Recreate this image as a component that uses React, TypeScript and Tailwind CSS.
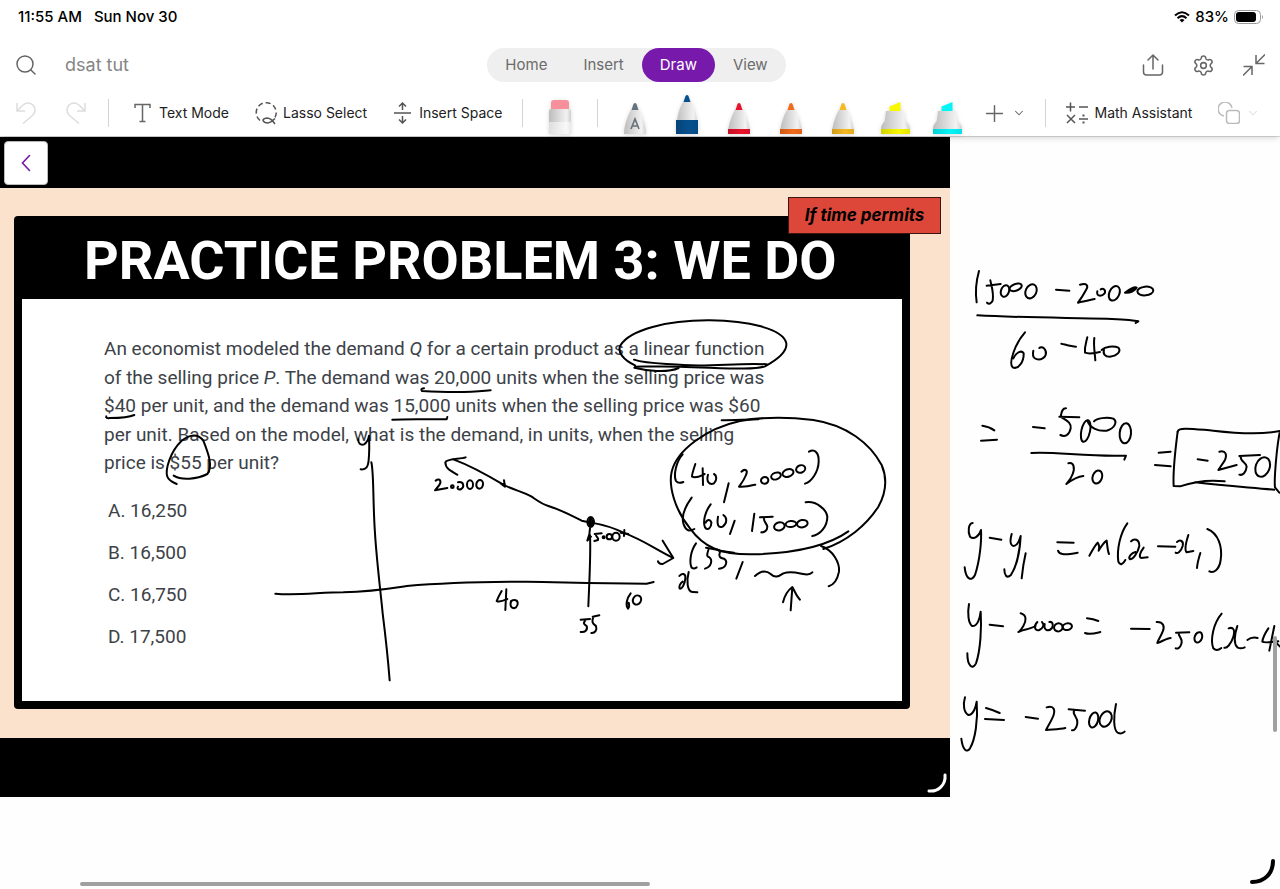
import { ReactNode, useState } from 'react';
import { ChevronDown, Plus, Search, Settings } from 'lucide-react';

type InkGroup = { x: number; y: number; strokes: string[] };

// closed oval, drawn as two arcs
const oval = (cx: number, cy: number, rx: number, ry: number, rot = 0) => {
    const a = (rot * Math.PI) / 180;
    const dx = rx * Math.cos(a);
    const dy = rx * Math.sin(a);
    return `M${cx - dx} ${cy - dy}A${rx} ${ry} ${rot} 1 1 ${cx + dx} ${cy + dy}A${rx} ${ry} ${rot} 1 1 ${cx - dx} ${cy - dy}`;
};

// pen strokes on the canvas, stored at three times the canvas resolution
const ink: InkGroup[] = [
    // underlines
    {
        x: 0,
        y: 43,
        strokes: [
            'M319 709Q316 716 330 714C355 714 385 713 403 705',
            'M1177 719C1220 716 1290 718 1340 718L1342 711',
            'M1075 778C1074 790 1082 797 1092 793C1102 787 1106 775 1107 767C1108 790 1108 820 1106 840C1104 862 1098 870 1082 868',
        ],
    },
    // circled $55
    {
        x: 90,
        y: 183,
        strokes: [
            'M251 467C275 482 320 478 352 462C370 440 355 400 340 362C325 340 300 342 275 362C240 395 225 450 232 470C238 484 248 486 260 492',
        ],
    },
    // "linear function" loop
    {
        x: 400,
        y: 163,
        strokes: [
            'M72 265Q60 266 66 273C120 276 200 278 256 272L272 271',
            'M705 196C670 180 650 155 662 135C690 90 800 60 930 61C1040 62 1150 85 1159 130C1162 155 1130 180 1095 199C1060 212 960 203 840 200C780 199 730 200 705 200',
            'M702 179C740 192 790 190 850 195C930 201 1020 188 1100 193',
            'M703 203C740 212 800 220 836 204',
            'M965 361C1000 361 1030 359 1075 358',
        ],
    },
    // coordinate pairs
    {
        x: 640,
        y: 263,
        strokes: [
            'M300 63C360 52 440 50 520 60C620 75 690 130 725 195C742 235 740 275 715 320C680 375 620 425 550 447',
            'M625 394C560 440 450 460 340 463C240 465 190 440 150 385C105 330 85 260 95 215C110 150 200 85 300 63',
            'M128 163C108 185 100 225 108 243Q115 252 130 246',
            'M166 192C160 210 155 225 156 230C170 236 185 226 194 222M188 205L189 255',
            'M204 224C198 245 208 256 222 250C232 240 230 226 222 222',
            'M266 250L252 307',
            'M304 215C315 205 325 210 318 225C310 245 300 255 297 260C315 262 330 258 346 254',
            oval(374, 241, 11, 10, -20),
            oval(408, 228, 15, 10, -20),
            oval(444, 219, 17, 11, -20),
            oval(482, 207, 14, 11, -20),
            'M507 155C525 145 537 160 536 185C535 215 515 245 495 251',
            'M155 293C135 320 125 350 130 370C138 395 150 395 163 387',
            'M212 313C195 335 188 365 195 382C203 394 215 382 214 367C210 355 200 360 197 368',
            'M234 350C230 375 235 385 248 380C262 370 262 352 250 345',
            'M284 362L270 402',
            'M343 341L336 393',
            'M360 352L398 350M372 353C370 365 380 370 382 380C382 392 372 398 364 397',
            oval(418, 379, 16, 12, -15),
            oval(453, 372, 16, 9, -5),
            oval(487, 371, 16, 11, -10),
            'M497 307C530 302 560 330 562 350C562 380 540 405 517 408',
            'M168 430C150 455 148 490 155 503Q162 508 170 502',
            'M205 450C200 465 200 470 208 472C218 480 215 500 195 506M198 443L236 450',
            'M240 455C235 470 240 475 252 476C265 485 258 505 237 506M236 452L282 458',
            'M308 486L289 536',
            'M345 528C365 510 380 512 392 522C405 535 415 530 430 520C455 512 475 520 495 523Q510 525 517 517',
            'M543 438C580 450 600 490 597 515C592 540 580 555 566 559',
            'M452 631L457 562M429 607C433 590 445 570 457 561C465 575 470 590 480 599',
            'M118 528C125 518 138 520 136 535C134 555 125 568 119 566C116 560 120 550 128 545M146 516C140 540 140 575 158 576L172 577',
        ],
    },
    // graph
    {
        x: 260,
        y: 283,
        strokes: [
            'M334 127C342 160 338 240 345 340C350 420 360 500 368 580C378 660 385 730 389 781',
            'M46 521C110 527 180 517 250 517C330 515 380 507 440 498C530 490 640 485 800 485C900 486 980 490 1160 491L1181 486',
            'M580 118C640 140 690 170 730 194C760 210 790 215 815 230C830 240 845 252 865 258C910 272 940 290 965 302C1000 310 1040 312 1090 338C1150 360 1190 390 1238 413',
            'M617 112C600 118 560 115 556 127C556 145 570 152 592 164',
            'M732 181L735 200L724 192L734 190',
            'M527 182C540 172 545 185 538 195L525 211L562 204',
            oval(577, 200, 4, 4),
            'M594 187C611 183 614 200 604 207C595 211 590 205 594 200',
            oval(630, 194, 9, 13),
            oval(659, 193, 10, 13, 10),
            oval(992, 306, 10, 15),
            oval(992, 307, 5, 11),
            'M992 296L992 318',
            'M990 325L988 343L982 362L993 350M990 345C993 400 988 480 985 559',
            'M1004 342L1025 340M1008 342C1006 352 1018 352 1014 360L1003 363',
            oval(1031, 352, 3, 3),
            oval(1048, 350, 8, 8),
            oval(1068, 350, 11, 12),
            'M1082 338L1105 342M1093 330L1092 348',
            'M1208 362L1240 414L1208 432Q1196 433 1194 424',
            'M725 513C718 525 712 538 710 543C720 548 735 540 742 537M739 508L736 570',
            'M753 543C748 562 758 568 768 562C777 552 774 540 763 540Q754 540 753 546',
            'M1112 520C1100 535 1096 555 1104 566Q1110 560 1106 548',
            oval(1131, 540, 12, 14, 30),
            'M962 599L990 597M977 599C968 612 972 612 980 618C984 630 975 638 962 636',
            'M998 590L1018 586M1000 590C994 608 998 610 1008 618C1012 630 1005 640 994 639',
        ],
    },
    // slope
    {
        x: 950,
        y: 113,
        strokes: [
            'M87 63C78 95 76 130 80 157',
            'M121 91C125 110 132 130 128 152Q120 166 111 158M110 107L152 102',
            oval(165, 123, 12, 18, 20),
            oval(197, 112, 19, 10, -20),
            oval(243, 124, 16, 22, 25),
            'M318 119L358 122',
            'M390 104C412 98 416 108 408 120C400 135 390 150 384 158C400 154 420 150 434 147',
            'M442 124C438 140 455 140 464 130C468 120 460 113 452 118',
            oval(493, 130, 15, 23, 25),
            'M525 128C540 115 555 110 560 113C556 122 540 130 525 128L552 117',
            oval(586, 123, 24, 13, -5),
            'M82 196C200 203 350 203 470 206C510 208 545 209 565 214L557 219',
            'M225 247C195 280 175 340 188 352C205 360 222 335 221 310C215 300 200 305 190 325',
            'M250 302C245 325 258 330 272 328C290 322 292 305 282 295C276 290 270 292 268 294',
            'M334 281C350 285 365 290 378 290',
            'M412 262C408 280 403 290 405 308C420 314 435 308 450 306M433 264C430 285 434 305 436 331',
            'M455 300C465 290 490 286 505 293C515 305 500 318 480 320C465 320 458 312 462 300',
            'M97 527Q118 530 133 541M93 572L141 569',
            'M249 531L284 535',
            'M348 475C335 475 335 488 332 500C345 510 365 515 362 535C358 555 345 562 331 555M328 500L388 502',
            oval(407, 543, 13, 33, 12),
            'M412 512C420 535 445 545 470 542C495 535 503 515 490 506C470 500 440 505 432 514',
            oval(526, 550, 17, 30, 5),
            'M244 609C300 604 400 618 500 617L528 617L523 629',
            'M355 640C372 635 375 655 368 672C362 690 350 700 349 702C365 690 380 680 400 678',
            oval(442, 681, 14, 20, 20),
            'M626 608L662 605M615 645L662 649',
            'M683 545C676 600 668 660 671 708L690 709C740 692 790 690 824 694M735 697C830 708 900 712 973 719',
            'M683 545C684 530 730 537 790 542C860 550 930 555 990 543C980 590 972 690 975 712L988 728',
            'M743 628L773 632',
            'M808 605C828 600 832 615 824 632L805 660L860 645',
            'M868 618L930 615M872 618C870 635 888 635 890 650C888 668 878 677 868 674',
            oval(938, 651, 21, 30, 20),
        ],
    },
    // point-slope form
    {
        x: 950,
        y: 363,
        strokes: [
            'M68 69C55 70 53 95 60 110C72 120 88 108 93 90C95 120 90 180 75 225C65 245 48 240 44 202',
            'M119 113L154 119',
            'M185 102C180 120 180 135 190 138C200 138 208 122 212 108C210 150 200 200 182 226C170 236 163 225 163 208',
            'M227 160C220 190 217 215 215 235',
            'M322 127L371 128M324 152C328 165 345 165 383 158',
            'M418 167C428 150 435 135 443 128C448 135 448 145 446 152C452 142 460 128 470 122C472 135 472 150 477 162',
            'M532 70C510 100 500 150 505 185C510 198 520 192 526 180',
            'M543 124C552 114 568 117 568 138C563 160 549 178 540 178C533 172 545 158 556 156M581 143C570 158 566 170 573 174L593 172',
            'M624 139L676 140',
            'M681 126C690 118 702 122 698 138C693 155 682 162 677 158M715 105C707 130 702 150 710 157L730 153',
            'M751 159C746 175 742 190 741 204',
            'M772 87C805 100 818 140 812 180C808 210 790 220 778 214',
            'M57 312C52 340 55 370 66 378C82 380 90 355 92 335C95 380 92 450 78 490C68 510 52 500 52 460',
            'M119 374L159 379',
            'M212 340C232 345 228 365 220 378C212 392 205 398 205 396C215 390 240 388 256 378',
            'M262 366C250 378 254 394 268 390C280 384 284 374 276 366M284 372C280 392 296 396 306 384C312 372 306 364 298 366',
            oval(325, 382, 13, 12, -20),
            oval(352, 380, 14, 10, -10),
            'M411 355Q430 357 445 363M405 399C420 405 435 400 451 396',
            'M543 386L599 387',
            'M620 366C640 365 645 380 638 395C632 410 622 425 622 429C635 425 650 415 662 414',
            'M678 398L718 397M686 398C684 410 700 415 694 432C690 445 682 447 677 445',
            oval(745, 412, 11, 16, 20),
            'M815 341C790 370 780 420 790 445Q800 455 814 444',
            'M836 385C850 380 856 390 850 410C842 435 830 445 823 443M862 378C855 400 850 430 862 442Q872 448 884 442',
            'M892 420Q905 410 923 414',
            'M955 385C945 400 938 415 937 425C945 430 965 426 985 424M973 378L958 452M980 430L990 440',
            'M45 592C38 615 42 638 55 645C70 645 78 620 80 605C85 660 75 720 60 745C50 760 38 750 34 716',
            'M108 624Q130 630 149 639M105 657L162 660',
            'M227 651L264 656',
            'M290 622C312 615 318 630 308 652C300 670 290 685 288 690C310 688 330 688 346 684',
            'M356 628L405 632M372 632C366 645 385 650 382 670C380 685 372 692 366 691',
            oval(431, 660, 13, 23, 15),
            oval(467, 657, 17, 24, 25),
            'M498 612C490 650 490 690 503 698Q515 704 524 695',
        ],
    },
];

const tabs = ['Home', 'Insert', 'Draw', 'View'];

const pens = [
    { name: 'Red pen', color: '#e8132b' },
    { name: 'Orange pen', color: '#f26a1b' },
    { name: 'Yellow pen', color: '#f5b921' },
];

const highlighters = [
    { name: 'Yellow highlighter', color: '#f8f800' },
    { name: 'Cyan highlighter', color: '#05f4f8' },
];

function Divider() {
    return <div className="h-7 w-px shrink-0 bg-[#d4d4d4]" />;
}

function ToolButton({ label, children }: { label: string; children: ReactNode }) {
    return (
        <button className="flex shrink-0 items-center gap-1.5 text-sm whitespace-nowrap text-[#212121]">
            {children}
            {label}
        </button>
    );
}

// tip and band are distances from the top of the drawing
function Pen({ color, band, tip, children }: { color: string; band: number; tip: number; children?: ReactNode }) {
    return (
        <svg width="28" height="40" viewBox="0 0 28 40" className="drop-shadow-sm">
            <path d={`M3 40C3 ${tip + 22} 7 ${tip + 12} 10 ${tip + 7}H18C21 ${tip + 12} 25 ${tip + 22} 25 40Z`} fill="url(#barrel)" />
            <path d={`M10.500 ${tip + 7}L12.500 ${tip + 1}Q14 ${tip - 1} 15.500 ${tip + 1}L17.500 ${tip + 7}Z`} fill={color} />
            {band < 40 && <path d={`M3 40V${band}H25V40Z`} fill={color} />}
            {band < 40 && <path d={`M3 40V${band}H25V40Z`} fill="url(#shade)" />}
            {children}
        </svg>
    );
}

function Highlighter({ color }: { color: string }) {
    return (
        <svg width="32" height="40" viewBox="0 0 32 40" className="drop-shadow-sm">
            <path d="M10.500 17V12.500L21.500 8V17Z" fill={color} />
            <path d="M7 17H25L26 25C27 29 31 29 31 35V40H2V35C2 29 6 29 6 25Z" fill="url(#barrel)" />
            <path d="M2 35H31V40H2Z" fill={color} />
            <path d="M2 35H31V40H2Z" fill="url(#shade)" />
        </svg>
    );
}

function StatusBar() {
    return (
        <div className="flex h-[34px] items-center justify-between pr-4 pl-[18px] text-[15px] font-medium text-black">
            <div className="flex gap-3">
                <span>11:55 AM</span>
                <span>Sun Nov 30</span>
            </div>
            <div className="flex items-center gap-[5px]">
                <svg width="16" height="12" viewBox="0 0 16 12" fill="none" stroke="#000" strokeWidth="2">
                    <path d="M1 4.500Q8-2 15 4.500M3.500 7.200Q8 3 12.500 7.200" />
                    <path d="M8 11.500L5.500 9Q8 7 10.500 9Z" fill="#000" stroke="none" />
                </svg>
                <span>83%</span>
                <svg width="30" height="14" viewBox="0 0 30 14">
                    <rect x="0.500" y="0.500" width="26" height="13" rx="4" fill="none" stroke="#999" />
                    <rect x="2" y="2" width="20" height="10" rx="3" />
                    <path d="M28 5Q30 7 28 9Z" fill="#999" />
                </svg>
            </div>
        </div>
    );
}

function TitleBar() {
    const [active, setActive] = useState('Draw');

    return (
        <div className="grid h-[62px] grid-cols-[1fr_auto_1fr] items-center pr-[15px] pl-2">
            <div className="flex items-center gap-[21px]">
                <button aria-label="Search" className="flex w-9 justify-center text-[#666]">
                    <Search size={24} strokeWidth={1.5} />
                </button>
                <input
                    aria-label="Notebook"
                    defaultValue="dsat tut"
                    className="w-40 bg-transparent text-lg text-[#858585] outline-none"
                />
            </div>
            <nav className="flex h-[34px] rounded-full bg-[#efefef]">
                {tabs.map((tab) => (
                    <button
                        key={tab}
                        onClick={() => setActive(tab)}
                        className={`rounded-full px-[18px] text-[15px] ${tab === active ? 'bg-[#7719aa] text-white' : 'text-[#6b6b6b]'}`}
                    >
                        {tab}
                    </button>
                ))}
            </nav>
            <div className="flex items-center justify-end gap-7 text-[#666]">
                <button aria-label="Share">
                    <svg width="22" height="22" viewBox="0 0 22 22" fill="none" stroke="currentColor" strokeWidth="1.500" strokeLinecap="round" strokeLinejoin="round">
                        <path d="M11 15V1M6 6L11 1L16 6M1.500 11V18Q1.500 21 4.500 21H17.500Q20.500 21 20.500 18V11" />
                    </svg>
                </button>
                <button aria-label="Settings">
                    <Settings size={23} strokeWidth={1.6} />
                </button>
                <button aria-label="Exit full screen">
                    <svg width="22" height="22" viewBox="0 0 22 22" fill="none" stroke="currentColor" strokeWidth="1.500">
                        <path d="M22 0.500L13 9.500M13 1V9.500H21.500M0 21.500L9 12.500M0.500 12.500H9V21" />
                    </svg>
                </button>
            </div>
        </div>
    );
}

function Toolbar() {
    return (
        <div className="flex h-10 items-start pl-px">
            <svg width="0" height="0" className="absolute">
                <linearGradient id="barrel">
                    <stop offset="0" stopColor="#bdbdbd" />
                    <stop offset="0.5" stopColor="#dedede" />
                    <stop offset="0.8" stopColor="#f2f2f2" />
                    <stop offset="1" stopColor="#d0d0d0" />
                </linearGradient>
                <linearGradient id="shade">
                    <stop offset="0" stopColor="#000" stopOpacity="0.15" />
                    <stop offset="0.6" stopColor="#000" stopOpacity="0" />
                    <stop offset="1" stopColor="#000" stopOpacity="0.08" />
                </linearGradient>
            </svg>
            <div className="flex h-[34px] shrink-0 items-center">
                <button aria-label="Undo" className="flex w-[50px] justify-center text-[#ddd]">
                    <svg width="20" height="22" viewBox="0 0 20 22" fill="none" stroke="currentColor" strokeWidth="1.500">
                        <path d="M1 1V9H9M1 9L7 3Q12-1 17 3Q21 8 17 13L7 21.500" />
                    </svg>
                </button>
                <button aria-label="Redo" className="flex w-[50px] justify-center text-[#ddd]">
                    <svg width="20" height="22" viewBox="0 0 20 22" fill="none" stroke="currentColor" strokeWidth="1.500">
                        <path d="M19 1V9H11M19 9L13 3Q8-1 3 3Q-1 8 3 13L13 21.500" />
                    </svg>
                </button>
            </div>
            <div className="flex h-[34px] shrink-0 items-center pl-[7px]">
                <Divider />
                <div className="flex gap-[26px] pr-5 pl-6">
                    <ToolButton label="Text Mode">
                        <svg width="20" height="20" viewBox="0 0 20 20" fill="none" stroke="#666" strokeWidth="1.500">
                            <path d="M2 5V1.500H17V5M9.500 1.500V18.500M6.500 18.500H12.500" />
                        </svg>
                    </ToolButton>
                    <ToolButton label="Lasso Select">
                        <svg width="22" height="24" viewBox="0 0 22 24" fill="none" stroke="#555" strokeWidth="1.500">
                            <path d="M5 19.500A10 10 0 1 1 18 19" strokeDasharray="5 3" />
                            <path d="M20 23Q16 17 12 17Q8 17.500 8 19.500Q9 22 13 22Q17 21 20 17.500" />
                        </svg>
                    </ToolButton>
                    <ToolButton label="Insert Space">
                        <svg width="20" height="22" viewBox="0 0 20 22" fill="none" stroke="#555" strokeWidth="1.500">
                            <path d="M1 11H18M9.500 8V1M6 4.500L9.500 1L13 4.500M9.500 14V21M6 17.500L9.500 21L13 17.500" />
                        </svg>
                    </ToolButton>
                </div>
            </div>
            <div className="flex h-[34px] shrink-0 items-center">
                <Divider />
            </div>
            <button aria-label="Eraser" className="w-[74px] shrink-0">
                <svg width="24" height="40" viewBox="0 0 24 40" className="mx-auto -mt-0.5 drop-shadow-sm">
                    <path d="M3 16V9Q3 6 6 6H18Q21 6 21 9V16Z" fill="#f8909c" />
                    <path d="M1 17Q1 15 3 15H21Q23 15 23 17V40H1Z" fill="url(#barrel)" />
                    <path d="M1 28H23V40H1Z" fill="#fff" fillOpacity="0.5" />
                </svg>
            </button>
            <div className="flex h-[34px] shrink-0 items-center pr-[11px]">
                <Divider />
            </div>
            <div className="-mt-0.5 flex shrink-0">
                <button aria-label="Ink to text pen" className="flex w-[52px] justify-center">
                    <Pen color="#65717b" band={40} tip={9}>
                        <path d="M10 35L14 25L18 35M11.500 32H16.500" fill="none" stroke="#65717b" strokeWidth="1.600" />
                    </Pen>
                </button>
                <button aria-label="Blue pen" className="flex w-[52px] justify-center">
                    <Pen color="#06508f" band={26} tip={1} />
                </button>
                {pens.map((pen) => (
                    <button key={pen.name} aria-label={pen.name} className="flex w-[52px] justify-center">
                        <Pen color={pen.color} band={35} tip={9} />
                    </button>
                ))}
                {highlighters.map((pen) => (
                    <button key={pen.name} aria-label={pen.name} className="flex w-[52px] justify-center">
                        <Highlighter color={pen.color} />
                    </button>
                ))}
            </div>
            <div className="flex h-[34px] shrink-0 items-center gap-1 pl-2 text-[#666]">
                <button aria-label="Add pen">
                    <Plus size={27} strokeWidth={1.3} />
                </button>
                <button aria-label="Pen options">
                    <ChevronDown size={14} strokeWidth={1.8} />
                </button>
            </div>
            <div className="flex h-[34px] shrink-0 items-center gap-5 pl-[19px]">
                <Divider />
                <ToolButton label="Math Assistant">
                    <svg width="22" height="22" viewBox="0 0 22 22" fill="none" stroke="#555" strokeWidth="1.500">
                        <path d="M0 5H9M4.500 0.500V9.500M13 5H22M1 13L9 21M9 13L1 21M13 17H22" />
                        <path d="M16.500 13.500H18.500M16.500 20.500H18.500" strokeWidth="2" />
                    </svg>
                </ToolButton>
            </div>
            <div className="flex h-[34px] shrink-0 items-center gap-[6px] pl-[26px] text-[#bbb]">
                <button aria-label="Shapes">
                    <svg width="22" height="22" viewBox="0 0 22 22" fill="none" stroke="currentColor" strokeWidth="1.500">
                        <path d="M6 14A7 7 0 1 1 14 6" />
                        <rect x="8.500" y="8.500" width="13" height="13" rx="3" />
                    </svg>
                </button>
                <button aria-label="Shape options" className="text-[#ddd]">
                    <ChevronDown size={14} strokeWidth={1.8} />
                </button>
            </div>
        </div>
    );
}

function Slide() {
    return (
        <section className="relative w-[950px] bg-black pt-[51px] pb-[59px] font-[Roboto,sans-serif]">
            <div className="bg-[#fbe2cd] pt-7 pr-10 pb-[29px] pl-[14px]">
                <div className="rounded bg-black px-2 pb-2">
                    <h1 className="flex h-[83px] items-center pt-1.5 pl-[62px] text-[54px] font-bold whitespace-nowrap text-white">
                        PRACTICE PROBLEM 3: WE DO
                    </h1>
                    <div className="h-[402px] bg-white px-[82px] pt-9 text-[19px] text-[#3d4248]">
                        <p className="leading-normal whitespace-nowrap">
                            An economist modeled the demand <i>Q</i> for a certain product as a linear function
                            <br />
                            of the selling price <i>P</i>. The demand was 20,000 units when the selling price was
                            <br />
                            $40 per unit, and the demand was 15,000 units when the selling price was $60
                            <br />
                            per unit. Based on the model, what is the demand, in units, when the selling
                            <br />
                            price is $55 per unit?
                        </p>
                        <ol className="mt-3 pl-1 leading-[42px]">
                            <li>A. 16,250</li>
                            <li>B. 16,500</li>
                            <li>C. 16,750</li>
                            <li>D. 17,500</li>
                        </ol>
                    </div>
                </div>
            </div>
            <div className="absolute top-[60px] right-[9px] flex h-[37px] w-[153px] items-center justify-center border border-[#3a1512] bg-[#dc473a] font-[Inter,sans-serif] text-[17px] font-bold whitespace-nowrap text-black italic">
                If time permits
            </div>
        </section>
    );
}

function Ink() {
    return (
        <svg width="1280" height="752" className="pointer-events-none absolute top-0 left-0" fill="none" stroke="#000" strokeLinecap="round" strokeLinejoin="round">
            {ink.map((group) => (
                <g key={`${group.x}-${group.y}`} transform={`translate(${group.x} ${group.y}) scale(0.33333)`} strokeWidth="6">
                    {group.strokes.map((d) => (
                        <path key={d} d={d} />
                    ))}
                </g>
            ))}
            <path d="M945 638C946 648 938 655 929 654" stroke="#fff" strokeWidth="3" />
            <path d="M1273 724C1273 737 1264 745 1252 745" strokeWidth="4" />
        </svg>
    );
}

export default function App() {
    return (
        <div className="flex min-h-screen flex-col overflow-hidden bg-white font-[Inter,sans-serif]">
            <header className="relative z-10 bg-white shadow-md">
                <StatusBar />
                <TitleBar />
                <Toolbar />
            </header>
            <main className="relative flex-1 overflow-hidden border-t border-[#999]/30 bg-[#fefefe]">
                <Slide />
                <Ink />
                <button
                    aria-label="Back"
                    className="absolute top-1 left-1 flex size-11 items-center justify-center rounded border border-[#bbb] bg-white text-[#7719aa]"
                >
                    <svg width="10" height="18" viewBox="0 0 10 18" fill="none" stroke="currentColor" strokeWidth="1.600" strokeLinecap="round">
                        <path d="M8.500 1.500L1.500 9L8.500 16.500" />
                    </svg>
                </button>
                <div className="absolute top-[499px] right-[3px] h-24 w-1 rounded-full bg-[#a0a0a0]" />
                <div className="absolute bottom-[3px] left-20 h-1 w-[570px] rounded-full bg-[#a0a0a0]" />
            </main>
        </div>
    );
}
